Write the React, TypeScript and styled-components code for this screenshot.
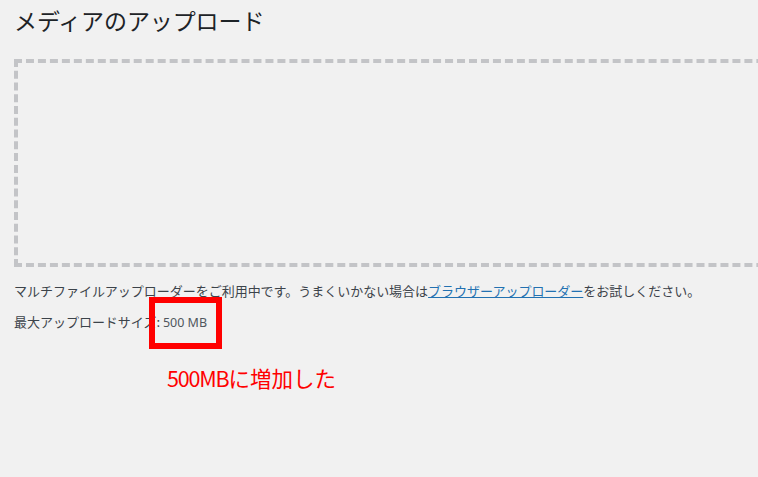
import React from "react";
import styled, { createGlobalStyle } from "styled-components";

const Global = createGlobalStyle`
  html, body {
    margin: 0;
    padding: 0;
    background: #f1f1f1;
    overflow: hidden;
  }
  body {
    font-family: "Noto Sans CJK JP", "Noto Sans", sans-serif;
    color: #3c434a;
  }
`;

const Page = styled.div`
  position: relative;
  width: 1900px;
  height: 477px;
  padding: 0 0 0 14px;
  box-sizing: border-box;
`;

const Title = styled.h1`
  margin: 0;
  padding: 6px 0 0;
  font-size: 23px;
  font-weight: 400;
  line-height: 1.3;
  color: #1d2327;
  letter-spacing: -0.1px;
`;

const DropArea = styled.div`
  margin-top: 23px;
  width: 1820px;
  height: 200px;
  border: 4px dashed #c3c4c7;
  display: flex;
  flex-direction: column;
  align-items: center;
`;

const DropInside = styled.div`
  margin-top: 68px;
  display: flex;
  flex-direction: column;
  align-items: center;
  gap: 8px;
`;

const DropInfo = styled.p`
  margin: 0;
  font-size: 20px;
  line-height: 1.3;
  color: #50575e;
`;

const Info = styled.p<{ $top: number }>`
  margin: ${(p) => p.$top}px 0 0;
  font-size: 13px;
  line-height: 1.5;
  letter-spacing: -0.02px;
  color: #3c434a;
`;

const Link = styled.a`
  color: #2271b1;
  text-decoration: underline;
`;

const Size = styled.span`
  font-family: "Noto Sans", "Open Sans", sans-serif;
  letter-spacing: 0;
  font-size: 12.5px;
  color: #50575e;
`;

const Highlight = styled.div`
  position: absolute;
  left: 149px;
  top: 297px;
  width: 73px;
  height: 52px;
  border: 6px solid #ff0000;
  box-sizing: border-box;
`;

const Note = styled.div`
  position: absolute;
  left: 167px;
  top: 364px;
  font-size: 21.5px;
  line-height: 1.3;
  color: #ff0000;
  white-space: nowrap;
`;

const NoteLatin = styled.span`
  letter-spacing: -1.2px;
`;

export default function App() {
  return (
    <>
      <Global />
      <Page>
        <Title>メディアのアップロード</Title>
        <DropArea>
          <DropInside>
            <DropInfo>ファイルをドロップしてアップロード</DropInfo>
          </DropInside>
        </DropArea>
        <Info $top={14}>
          マルチファイルアップローダーをご利用中です。うまくいかない場合は
          <Link href="#">ブラウザーアップローダー</Link>をお試しください。
        </Info>
        <Info $top={12}>
          最大アップロードサイズ: <Size>500 MB</Size>
        </Info>
        <Highlight />
        <Note>
          <NoteLatin>500MB</NoteLatin>に増加した
        </Note>
      </Page>
    </>
  );
}
